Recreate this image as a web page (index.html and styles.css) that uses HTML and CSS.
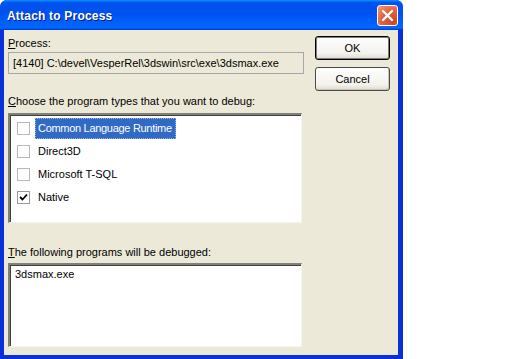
FILE: index.html
```html
<!DOCTYPE html>
<html lang="en">

<head>
    <meta charset="UTF-8">
    <title>Attach to Process</title>
    <link rel="stylesheet" href="styles.css">
</head>

<body>
    <div class="window">
        <div class="title-bar">
            <span class="title">Attach to Process</span>
            <button class="close-btn" aria-label="Close">
                <svg width="13" height="13" viewBox="0 0 13 13">
                    <path d="M2 2 L11 11 M11 2 L2 11" stroke="#fff" stroke-width="2.4" stroke-linecap="round" />
                </svg>
            </button>
        </div>
        <div class="client">
            <div class="main">
                <label class="field-label"><u>P</u>rocess:</label>
                <div class="readonly-box">[4140] C:\devel\VesperRel\3dswin\src\exe\3dsmax.exe</div>

                <label class="field-label gap-top"><u>C</u>hoose the program types that you want to debug:</label>
                <div class="list-box">
                    <div class="list-item">
                        <span class="check"></span>
                        <span class="item-text selected">Common Language Runtime</span>
                    </div>
                    <div class="list-item">
                        <span class="check"></span>
                        <span class="item-text">Direct3D</span>
                    </div>
                    <div class="list-item">
                        <span class="check"></span>
                        <span class="item-text">Microsoft T-SQL</span>
                    </div>
                    <div class="list-item">
                        <span class="check checked">
                            <svg width="9" height="9" viewBox="0 0 9 9">
                                <path d="M1 4 L3.5 6.5 L8 1.5" fill="none" stroke="#000" stroke-width="1.8" />
                            </svg>
                        </span>
                        <span class="item-text">Native</span>
                    </div>
                </div>

                <label class="field-label gap-top-lg"><u>T</u>he following programs will be debugged:</label>
                <div class="program-box">3dsmax.exe</div>
            </div>
            <div class="side">
                <button class="btn btn-default">OK</button>
                <button class="btn">Cancel</button>
            </div>
        </div>
    </div>
</body>

</html>
```

FILE: styles.css
```css
body {
    margin: 0;
    background-color: #fff;
    font-family: 'Liberation Sans', Arial, sans-serif;
    font-size: 11px;
    color: #000;
}

.window {
    width: 403px;
    height: 359px;
    background-color: #0831d9;
    border-radius: 7px 7px 0 0;
    display: flex;
    flex-direction: column;
    overflow: hidden;
}

.title-bar {
    height: 30px;
    flex-shrink: 0;
    display: flex;
    align-items: center;
    justify-content: space-between;
    padding: 1px 5px 0 7px;
    box-sizing: border-box;
    background: linear-gradient(180deg, #0997ff, #0053ee 8%, #0050ee 40%, #0066ff 88%, #0066ff 93%, #005bff 95%, #003dd7 96%, #003dd7);
}

.title {
    color: #fff;
    font-weight: bold;
    font-size: 12px;
    letter-spacing: 0.2px;
    text-shadow: 1px 1px #0a1883;
}

.close-btn {
    width: 21px;
    height: 21px;
    padding: 0;
    border: 1px solid #fff;
    border-radius: 3px;
    background: radial-gradient(circle at 80% 85%, #cc4626, #e1643f 55%, #f19b7d);
    display: flex;
    align-items: center;
    justify-content: center;
}

.client {
    flex: 1;
    margin: 0 5px 4px 4px;
    background-color: #ece9d8;
    display: flex;
}

.main {
    width: 296px;
    padding: 7px 0 0 4px;
    display: flex;
    flex-direction: column;
}

.field-label {
    display: block;
    line-height: 13px;
}

.gap-top {
    margin-top: 21px;
}

.gap-top-lg {
    margin-top: 23px;
}

.readonly-box {
    margin-top: 2px;
    height: 22px;
    box-sizing: border-box;
    border: 1px solid #a7a6aa;
    padding: 3px 4px 0 4px;
    line-height: 14px;
    white-space: nowrap;
    overflow: hidden;
}

.list-box,
.program-box {
    width: 294px;
    box-sizing: border-box;
    background-color: #fff;
    border-top: 2px solid #828177;
    border-left: 2px solid #828177;
    border-right: 1px solid #f6f5ef;
    border-bottom: 1px solid #f6f5ef;
    box-shadow: inset 1px 1px #404040;
}

.list-box {
    margin-top: 5px;
    height: 110px;
    padding: 2px 0 0 7px;
}

.list-item {
    height: 23px;
    display: flex;
    align-items: center;
}

.check {
    width: 11px;
    height: 11px;
    border: 1px solid #b8b8b8;
    background-color: #fff;
    display: flex;
    align-items: center;
    justify-content: center;
}

.checked {
    border-color: #9a9a9a;
}

.item-text {
    margin-left: 5px;
    padding: 3px 3px 3px 2px;
    line-height: 13px;
    border: 1px dotted transparent;
}

.item-text.selected {
    background-color: #316ac5;
    color: #fff;
    border-color: #9fb6e0;
    letter-spacing: -0.3px;
}

.program-box {
    margin-top: 4px;
    height: 84px;
    padding: 3px 0 0 5px;
    line-height: 13px;
}

.side {
    padding: 6px 0 0 11px;
    display: flex;
    flex-direction: column;
    gap: 7px;
}

.btn {
    width: 75px;
    height: 24px;
    padding: 0;
    font-family: 'Liberation Sans', Arial, sans-serif;
    font-size: 11px;
    color: #000;
    border: 1px solid #4a4a4a;
    border-radius: 3px;
    background: linear-gradient(180deg, #fefefe, #f3f2ec 75%, #dedbcf);
    box-shadow: inset -1px -1px #c9c6b8;
}

.btn-default {
    border-color: #000;
    box-shadow: inset 0 0 0 1px #7d7d7d;
}
```
